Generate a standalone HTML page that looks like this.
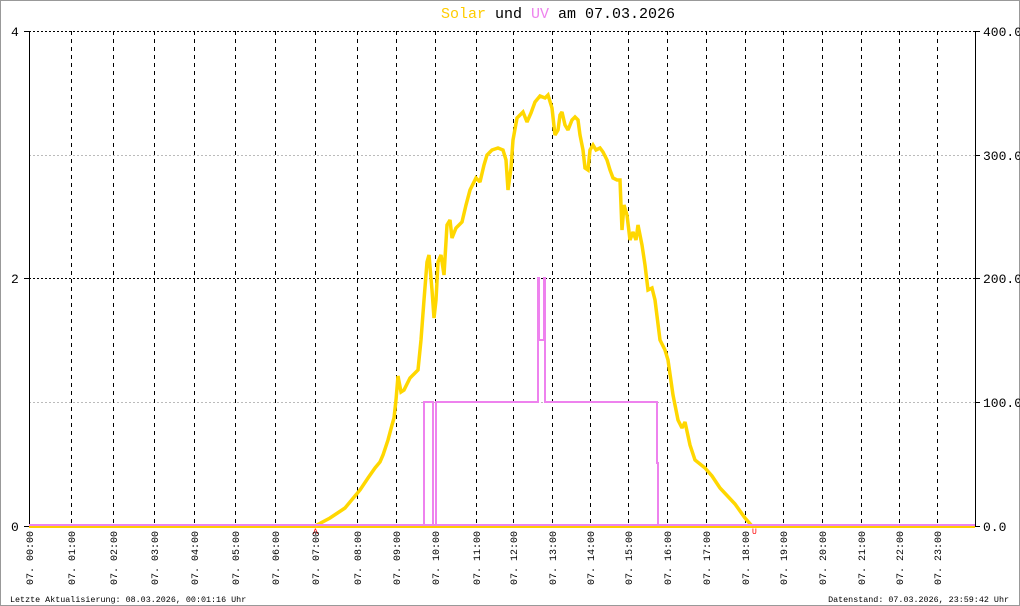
<!DOCTYPE html>
<html><head><meta charset="utf-8"><style>
html,body{margin:0;padding:0;background:#fff}
svg{display:block}
text{font-family:"Liberation Mono","DejaVu Sans Mono",monospace}
</style></head><body>
<svg width="1020" height="606" viewBox="0 0 1020 606" xmlns="http://www.w3.org/2000/svg">
<rect x="0.5" y="0.5" width="1019" height="605" fill="#fff" stroke="#999"/>
<text x="558" y="18" font-size="15" text-anchor="middle"><tspan fill="#ffcc00">Solar</tspan> und <tspan fill="#ee82ee">UV</tspan> am 07.03.2026</text>
<g stroke-width="1">
<line x1="29" y1="31.5" x2="975" y2="31.5" stroke="#000" stroke-dasharray="2,2"/>
<line x1="29" y1="155.5" x2="975" y2="155.5" stroke="#bbb" stroke-dasharray="2,2"/>
<line x1="29" y1="278.5" x2="975" y2="278.5" stroke="#000" stroke-dasharray="2,2"/>
<line x1="29" y1="402.5" x2="975" y2="402.5" stroke="#bbb" stroke-dasharray="2,2"/>
</g>
<g stroke="#000" stroke-dasharray="4,4" stroke-width="1">
<line x1="71.5" y1="31" x2="71.5" y2="526"/><line x1="113.5" y1="31" x2="113.5" y2="526"/>
<line x1="154.5" y1="31" x2="154.5" y2="526"/><line x1="194.5" y1="31" x2="194.5" y2="526"/>
<line x1="235.5" y1="31" x2="235.5" y2="526"/><line x1="275.5" y1="31" x2="275.5" y2="526"/>
<line x1="315.5" y1="31" x2="315.5" y2="526"/><line x1="357.5" y1="31" x2="357.5" y2="526"/>
<line x1="396.5" y1="31" x2="396.5" y2="526"/><line x1="435.5" y1="31" x2="435.5" y2="526"/>
<line x1="476.5" y1="31" x2="476.5" y2="526"/><line x1="513.5" y1="31" x2="513.5" y2="526"/>
<line x1="552.5" y1="31" x2="552.5" y2="526"/><line x1="590.5" y1="31" x2="590.5" y2="526"/>
<line x1="628.5" y1="31" x2="628.5" y2="526"/><line x1="667.5" y1="31" x2="667.5" y2="526"/>
<line x1="706.5" y1="31" x2="706.5" y2="526"/><line x1="745.5" y1="31" x2="745.5" y2="526"/>
<line x1="783.5" y1="31" x2="783.5" y2="526"/><line x1="822.5" y1="31" x2="822.5" y2="526"/>
<line x1="861.5" y1="31" x2="861.5" y2="526"/><line x1="899.5" y1="31" x2="899.5" y2="526"/>
<line x1="937.5" y1="31" x2="937.5" y2="526"/>
</g>
<g stroke="#000" stroke-width="1">
<line x1="29.5" y1="31" x2="29.5" y2="526"/>
<line x1="975.5" y1="31" x2="975.5" y2="526"/>
<line x1="24" y1="31.5" x2="29" y2="31.5"/><line x1="24" y1="278.5" x2="29" y2="278.5"/><line x1="24" y1="526.5" x2="29" y2="526.5"/>
<line x1="975" y1="31.5" x2="980" y2="31.5"/><line x1="975" y1="155.5" x2="980" y2="155.5"/><line x1="975" y1="278.5" x2="980" y2="278.5"/><line x1="975" y1="402.5" x2="980" y2="402.5"/><line x1="975" y1="526.5" x2="980" y2="526.5"/>
</g>
<line x1="29" y1="526.5" x2="975" y2="526.5" stroke="#ffcc00" stroke-width="3"/>
<line x1="29" y1="525" x2="975" y2="525" stroke="#ee82ee" stroke-width="2"/>
<g font-size="13" fill="#000">
<text x="11" y="36">4</text><text x="11" y="283">2</text><text x="11" y="531">0</text>
<text x="983" y="36">400.0</text><text x="983" y="160">300.0</text><text x="983" y="283">200.0</text><text x="983" y="407">100.0</text><text x="983" y="531">0.0</text>
</g>
<polyline fill="none" stroke="#ffd700" stroke-width="3.5" stroke-linejoin="miter" stroke-miterlimit="2" points="315,526 330,518 345,508 360,490 368,478 375,468 380,462 383,455 388,440 392,425 394,418 396,400 398,376 401,392 404,390 410,378 418,370 421,340 424,300 427,262 429,255 432,290 434,318 436,300 438,262 441,255 444,275 447,225 450,220 452,238 456,228 462,222 466,205 470,190 476,178 480,182 484,165 487,155 492,150 498,148 503,150 506,160 508,190 511,168 513,140 517,118 523,112 527,122 531,113 535,102 540,96 545,98 548,95 552,108 555,135 558,130 560,115 562,112 565,125 568,130 572,120 575,117 578,120 580,135 583,150 585,168 588,170 590,150 593,145 596,150 600,148 603,152 607,160 610,170 613,178 617,180 620,180 622,230 624,205 627,215 630,240 633,232 636,240 638,225 642,245 645,265 648,290 652,288 655,300 660,340 665,350 668,360 673,395 678,420 682,428 685,422 690,445 695,460 705,468 712,476 720,488 735,504 745,518 752,526"/>
<polyline fill="none" stroke="#ee82ee" stroke-width="2" points="29,525 424,525 424,402 433,402 433,525 436,525 436,402 538,402 538,278 539,278 539,340 544,340 544,278 545,278 545,402 657,402 657,463 658,463 658,525 975,525"/>
<text x="313" y="534" font-size="8" fill="#f00">A</text>
<text x="752" y="534" font-size="8" fill="#f00">U</text>
<g font-size="10" fill="#000">
<text transform="translate(33,585) rotate(-90)">07. 00:00</text>
<text transform="translate(75,585) rotate(-90)">07. 01:00</text>
<text transform="translate(117,585) rotate(-90)">07. 02:00</text>
<text transform="translate(158,585) rotate(-90)">07. 03:00</text>
<text transform="translate(198,585) rotate(-90)">07. 04:00</text>
<text transform="translate(239,585) rotate(-90)">07. 05:00</text>
<text transform="translate(279,585) rotate(-90)">07. 06:00</text>
<text transform="translate(319,585) rotate(-90)">07. 07:00</text>
<text transform="translate(361,585) rotate(-90)">07. 08:00</text>
<text transform="translate(400,585) rotate(-90)">07. 09:00</text>
<text transform="translate(439,585) rotate(-90)">07. 10:00</text>
<text transform="translate(480,585) rotate(-90)">07. 11:00</text>
<text transform="translate(517,585) rotate(-90)">07. 12:00</text>
<text transform="translate(556,585) rotate(-90)">07. 13:00</text>
<text transform="translate(594,585) rotate(-90)">07. 14:00</text>
<text transform="translate(632,585) rotate(-90)">07. 15:00</text>
<text transform="translate(671,585) rotate(-90)">07. 16:00</text>
<text transform="translate(710,585) rotate(-90)">07. 17:00</text>
<text transform="translate(749,585) rotate(-90)">07. 18:00</text>
<text transform="translate(787,585) rotate(-90)">07. 19:00</text>
<text transform="translate(826,585) rotate(-90)">07. 20:00</text>
<text transform="translate(865,585) rotate(-90)">07. 21:00</text>
<text transform="translate(903,585) rotate(-90)">07. 22:00</text>
<text transform="translate(941,585) rotate(-90)">07. 23:00</text>
</g>
<text x="10" y="602" font-size="8.4" fill="#000">Letzte Aktualisierung: 08.03.2026, 00:01:16 Uhr</text>
<text x="1009" y="602" font-size="8.4" fill="#000" text-anchor="end">Datenstand: 07.03.2026, 23:59:42 Uhr</text>
</svg>
</body></html>
